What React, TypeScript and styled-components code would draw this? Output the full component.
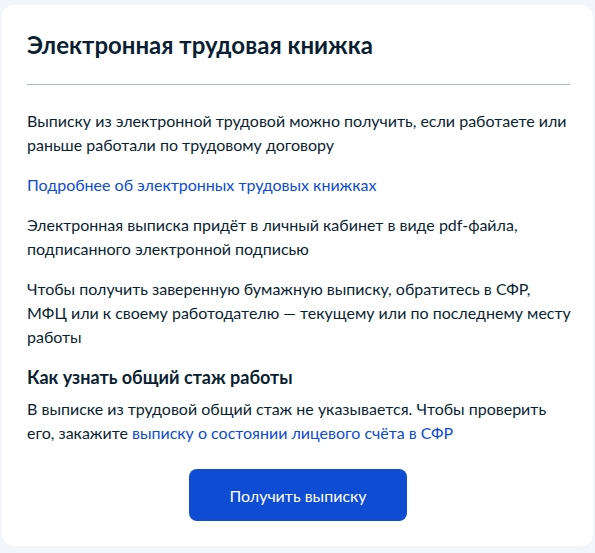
import React from 'react';
import styled, { createGlobalStyle } from 'styled-components';

const GlobalStyle = createGlobalStyle`
  html, body {
    margin: 0;
    padding: 0;
    background: #f2f5fa;
    font-family: Lato, "Liberation Sans", sans-serif;
  }
`;

const Page = styled.div`
  width: 595px;
  height: 553px;
  padding: 5px 2px 7px 2px;
  box-sizing: border-box;
`;

const Card = styled.section`
  background: #ffffff;
  border-radius: 12px;
  padding: 26px 17px 24px 25px;
  height: 100%;
  box-sizing: border-box;
  display: flex;
  flex-direction: column;
`;

const Title = styled.h2`
  margin: 0;
  font-size: 24px;
  line-height: 28px;
  font-weight: 700;
  color: #0b1f33;
`;

const Divider = styled.hr`
  margin: 25px 6px 24px 0;
  border: none;
  border-top: 1px solid #a9b8d1;
`;

const Paragraph = styled.p`
  margin: 0 0 16px;
  font-size: 16px;
  line-height: 24px;
  color: #0b1f33;
`;

const Link = styled.a`
  color: #0d4cd3;
  text-decoration: none;
`;

const Subtitle = styled.h3`
  margin: 0 0 8px;
  font-size: 18px;
  line-height: 24px;
  font-weight: 700;
  color: #0b1f33;
`;

const Actions = styled.div`
  display: flex;
  justify-content: center;
  margin-top: 8px;
  padding-right: 7px;
`;

const Button = styled.button`
  width: 218px;
  height: 52px;
  border: none;
  border-radius: 8px;
  background: #0d4cd3;
  color: #ffffff;
  font-family: inherit;
  font-size: 16px;
  cursor: pointer;
`;

const App = () => {
  return (
    <Page>
      <GlobalStyle />
      <Card>
        <Title>Электронная трудовая книжка</Title>
        <Divider />
        <Paragraph>
          Выписку из электронной трудовой можно получить, если работаете или
          раньше работали по трудовому договору
        </Paragraph>
        <Paragraph>
          <Link href="#">Подробнее об электронных трудовых книжках</Link>
        </Paragraph>
        <Paragraph>
          Электронная выписка придёт в личный кабинет в виде pdf-файла,
          подписанного электронной подписью
        </Paragraph>
        <Paragraph>
          Чтобы получить заверенную бумажную выписку, обратитесь в СФР,
          <br />
          МФЦ или к своему работодателю — текущему или по последнему месту
          работы
        </Paragraph>
        <Subtitle>Как узнать общий стаж работы</Subtitle>
        <Paragraph>
          В выписке из трудовой общий стаж не указывается. Чтобы проверить
          его, закажите{' '}
          <Link href="#">выписку о состоянии лицевого счёта в СФР</Link>
        </Paragraph>
        <Actions>
          <Button>Получить выписку</Button>
        </Actions>
      </Card>
    </Page>
  );
};

export default App;
